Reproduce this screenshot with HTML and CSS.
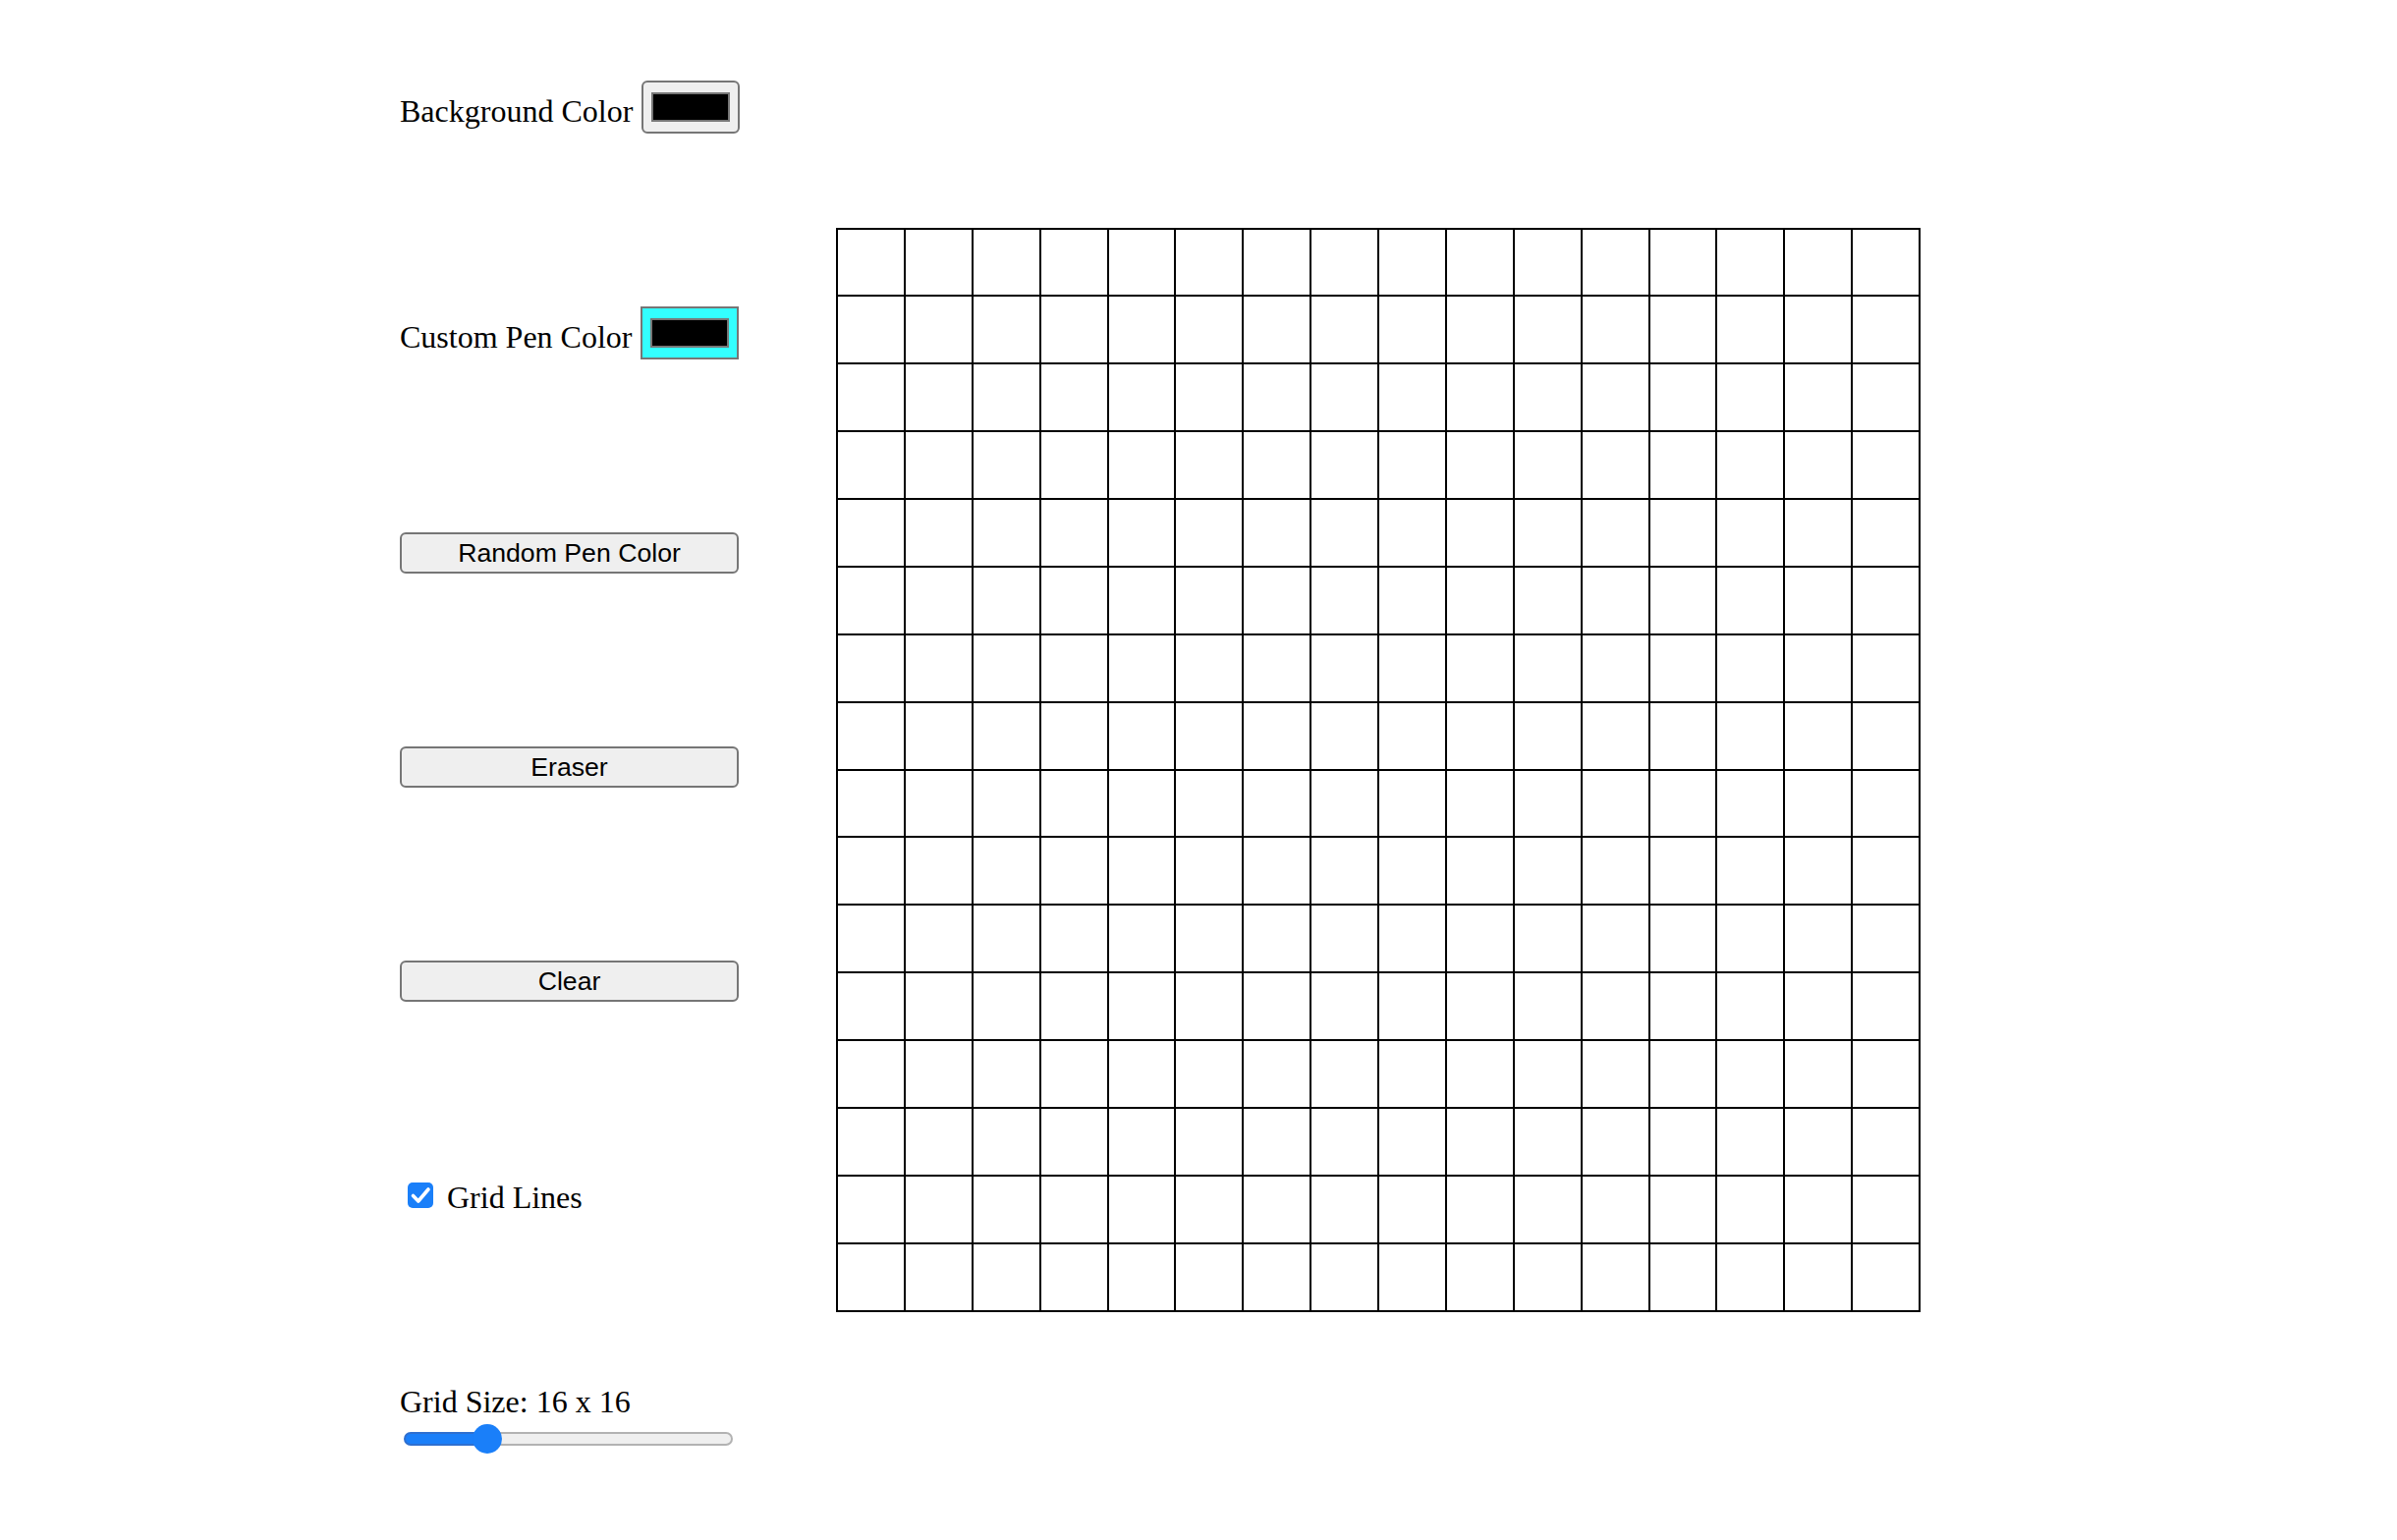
FILE: index.html
```html
<!DOCTYPE html>
<html lang="en">
<head>
<meta charset="utf-8">
<title>Etch A Sketch</title>
<link rel="stylesheet" href="styles.css">
</head>
<body>
<main class="app">
  <aside class="controls">
    <div class="control-row">
      <label class="control-label" for="bg-color">Background Color</label>
      <input type="color" id="bg-color" class="color-input" value="#000000">
    </div>
    <div class="control-row">
      <label class="control-label" for="pen-color">Custom Pen Color</label>
      <input type="color" id="pen-color" class="color-input color-input--active" value="#000000">
    </div>
    <button class="btn" type="button">Random Pen Color</button>
    <button class="btn" type="button">Eraser</button>
    <button class="btn" type="button">Clear</button>
    <label class="check-row">
      <span class="checkbox"><svg viewBox="0 0 26 26" width="26" height="26"><path d="M5.5 13.5 L10.8 19 L21 7" fill="none" stroke="#fff" stroke-width="3.6" stroke-linecap="round" stroke-linejoin="round"/></svg></span>
      <span class="check-text">Grid Lines</span>
    </label>
    <div class="size-control">
      <label class="size-label" for="grid-size">Grid Size: 16 x 16</label>
      <input type="range" id="grid-size" class="size-range" min="2" max="64" value="16" style="--fill: 25%">
    </div>
  </aside>
  <div class="canvas">
    <div class="cell"></div><div class="cell"></div><div class="cell"></div><div class="cell"></div><div class="cell"></div><div class="cell"></div><div class="cell"></div><div class="cell"></div><div class="cell"></div><div class="cell"></div><div class="cell"></div><div class="cell"></div><div class="cell"></div><div class="cell"></div><div class="cell"></div><div class="cell"></div>
    <div class="cell"></div><div class="cell"></div><div class="cell"></div><div class="cell"></div><div class="cell"></div><div class="cell"></div><div class="cell"></div><div class="cell"></div><div class="cell"></div><div class="cell"></div><div class="cell"></div><div class="cell"></div><div class="cell"></div><div class="cell"></div><div class="cell"></div><div class="cell"></div>
    <div class="cell"></div><div class="cell"></div><div class="cell"></div><div class="cell"></div><div class="cell"></div><div class="cell"></div><div class="cell"></div><div class="cell"></div><div class="cell"></div><div class="cell"></div><div class="cell"></div><div class="cell"></div><div class="cell"></div><div class="cell"></div><div class="cell"></div><div class="cell"></div>
    <div class="cell"></div><div class="cell"></div><div class="cell"></div><div class="cell"></div><div class="cell"></div><div class="cell"></div><div class="cell"></div><div class="cell"></div><div class="cell"></div><div class="cell"></div><div class="cell"></div><div class="cell"></div><div class="cell"></div><div class="cell"></div><div class="cell"></div><div class="cell"></div>
    <div class="cell"></div><div class="cell"></div><div class="cell"></div><div class="cell"></div><div class="cell"></div><div class="cell"></div><div class="cell"></div><div class="cell"></div><div class="cell"></div><div class="cell"></div><div class="cell"></div><div class="cell"></div><div class="cell"></div><div class="cell"></div><div class="cell"></div><div class="cell"></div>
    <div class="cell"></div><div class="cell"></div><div class="cell"></div><div class="cell"></div><div class="cell"></div><div class="cell"></div><div class="cell"></div><div class="cell"></div><div class="cell"></div><div class="cell"></div><div class="cell"></div><div class="cell"></div><div class="cell"></div><div class="cell"></div><div class="cell"></div><div class="cell"></div>
    <div class="cell"></div><div class="cell"></div><div class="cell"></div><div class="cell"></div><div class="cell"></div><div class="cell"></div><div class="cell"></div><div class="cell"></div><div class="cell"></div><div class="cell"></div><div class="cell"></div><div class="cell"></div><div class="cell"></div><div class="cell"></div><div class="cell"></div><div class="cell"></div>
    <div class="cell"></div><div class="cell"></div><div class="cell"></div><div class="cell"></div><div class="cell"></div><div class="cell"></div><div class="cell"></div><div class="cell"></div><div class="cell"></div><div class="cell"></div><div class="cell"></div><div class="cell"></div><div class="cell"></div><div class="cell"></div><div class="cell"></div><div class="cell"></div>
    <div class="cell"></div><div class="cell"></div><div class="cell"></div><div class="cell"></div><div class="cell"></div><div class="cell"></div><div class="cell"></div><div class="cell"></div><div class="cell"></div><div class="cell"></div><div class="cell"></div><div class="cell"></div><div class="cell"></div><div class="cell"></div><div class="cell"></div><div class="cell"></div>
    <div class="cell"></div><div class="cell"></div><div class="cell"></div><div class="cell"></div><div class="cell"></div><div class="cell"></div><div class="cell"></div><div class="cell"></div><div class="cell"></div><div class="cell"></div><div class="cell"></div><div class="cell"></div><div class="cell"></div><div class="cell"></div><div class="cell"></div><div class="cell"></div>
    <div class="cell"></div><div class="cell"></div><div class="cell"></div><div class="cell"></div><div class="cell"></div><div class="cell"></div><div class="cell"></div><div class="cell"></div><div class="cell"></div><div class="cell"></div><div class="cell"></div><div class="cell"></div><div class="cell"></div><div class="cell"></div><div class="cell"></div><div class="cell"></div>
    <div class="cell"></div><div class="cell"></div><div class="cell"></div><div class="cell"></div><div class="cell"></div><div class="cell"></div><div class="cell"></div><div class="cell"></div><div class="cell"></div><div class="cell"></div><div class="cell"></div><div class="cell"></div><div class="cell"></div><div class="cell"></div><div class="cell"></div><div class="cell"></div>
    <div class="cell"></div><div class="cell"></div><div class="cell"></div><div class="cell"></div><div class="cell"></div><div class="cell"></div><div class="cell"></div><div class="cell"></div><div class="cell"></div><div class="cell"></div><div class="cell"></div><div class="cell"></div><div class="cell"></div><div class="cell"></div><div class="cell"></div><div class="cell"></div>
    <div class="cell"></div><div class="cell"></div><div class="cell"></div><div class="cell"></div><div class="cell"></div><div class="cell"></div><div class="cell"></div><div class="cell"></div><div class="cell"></div><div class="cell"></div><div class="cell"></div><div class="cell"></div><div class="cell"></div><div class="cell"></div><div class="cell"></div><div class="cell"></div>
    <div class="cell"></div><div class="cell"></div><div class="cell"></div><div class="cell"></div><div class="cell"></div><div class="cell"></div><div class="cell"></div><div class="cell"></div><div class="cell"></div><div class="cell"></div><div class="cell"></div><div class="cell"></div><div class="cell"></div><div class="cell"></div><div class="cell"></div><div class="cell"></div>
    <div class="cell"></div><div class="cell"></div><div class="cell"></div><div class="cell"></div><div class="cell"></div><div class="cell"></div><div class="cell"></div><div class="cell"></div><div class="cell"></div><div class="cell"></div><div class="cell"></div><div class="cell"></div><div class="cell"></div><div class="cell"></div><div class="cell"></div><div class="cell"></div>
  </div>
</main>
</body>
</html>
```
FILE: styles.css
```css
html, body {
  margin: 0;
  background: #ffffff;
}

body {
  font-family: "Liberation Serif", "Times New Roman", serif;
  font-size: 32px;
  color: #000;
}

.app {
  display: flex;
  align-items: center;
  padding: 82px 0 0 407px;
}

.controls {
  display: flex;
  flex-direction: column;
  gap: 176px;
  width: 345px;
  flex: none;
}

.control-row {
  display: flex;
  align-items: center;
  height: 54px;
}

.control-label {
  line-height: 37px;
  padding-top: 8px;
  margin-right: 9px;
  white-space: nowrap;
}

.color-input {
  -webkit-appearance: none;
  appearance: none;
  box-sizing: border-box;
  width: 100px;
  height: 54px;
  margin: 0;
  padding: 2px 4px;
  border: 2px solid #767676;
  border-radius: 6px;
  background: #efefef;
  flex: none;
}

.color-input::-webkit-color-swatch-wrapper {
  padding: 8px 4px;
}

.color-input::-webkit-color-swatch {
  border: 2px solid #777777;
  border-radius: 0;
}

.color-input--active {
  background: #33ffff;
  border-radius: 0;
}

.btn {
  box-sizing: border-box;
  width: 345px;
  height: 42px;
  margin: 0;
  padding: 0;
  border: 2px solid #767676;
  border-radius: 6px;
  background: #efefef;
  font-family: "Liberation Sans", Arial, sans-serif;
  font-size: 26.67px;
  color: #000;
}

.check-row {
  display: flex;
  align-items: center;
  height: 42px;
}

.checkbox {
  display: block;
  width: 26px;
  height: 26px;
  margin: 0 14px 0 8px;
  border-radius: 5px;
  background: #1a7ff9;
  flex: none;
}

.checkbox svg {
  display: block;
}

.check-text {
  line-height: 37px;
  padding-top: 4px;
}

.size-control {
  display: flex;
  flex-direction: column;
  align-items: flex-start;
  margin-top: -4px;
}

.size-label {
  line-height: 34px;
}

.size-range {
  -webkit-appearance: none;
  appearance: none;
  width: 335px;
  height: 32px;
  margin: 5px 4px 0;
  background: transparent;
}

.size-range::-webkit-slider-runnable-track {
  box-sizing: border-box;
  height: 14px;
  border-radius: 7px;
  border: 2px solid transparent;
  background:
    linear-gradient(to right, #1a7ff9 var(--fill), #efefef var(--fill)) padding-box,
    linear-gradient(to right, #2e6fd0 var(--fill), #b2b2b2 var(--fill)) border-box;
}

.size-range::-webkit-slider-thumb {
  -webkit-appearance: none;
  appearance: none;
  width: 30px;
  height: 30px;
  margin-top: -10px;
  border: none;
  border-radius: 50%;
  background: #1a7ff9;
}

.canvas {
  box-sizing: border-box;
  display: grid;
  grid-template-columns: repeat(16, 1fr);
  grid-template-rows: repeat(16, 1fr);
  width: 1104px;
  height: 1104px;
  margin: 4px 0 0 99px;
  flex: none;
  border-left: 2px solid #000;
  border-top: 2px solid #000;
}

.cell {
  border-right: 2px solid #000;
  border-bottom: 2px solid #000;
  background: #fff;
}
```
